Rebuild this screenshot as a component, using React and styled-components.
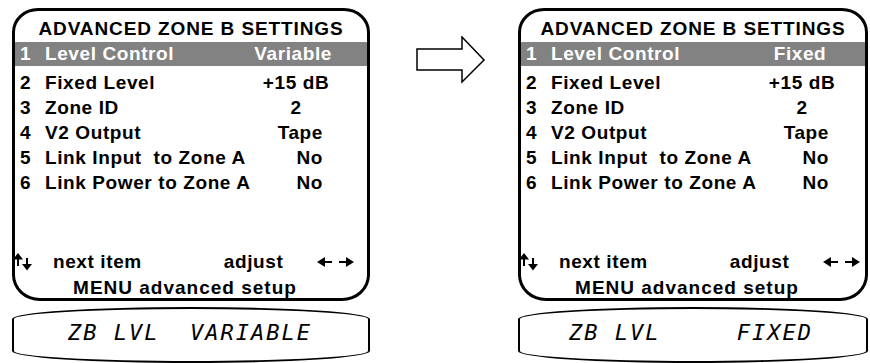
import styled, { createGlobalStyle } from "styled-components";

const GlobalStyle = createGlobalStyle`
  html, body {
    margin: 0;
    padding: 0;
    background: #ffffff;
  }
  body {
    font-family: "Liberation Sans", Arial, sans-serif;
    color: #000000;
  }
`;

const Page = styled.div`
  width: 870px;
  height: 363px;
  box-sizing: border-box;
  padding: 8px 0 0 12px;
  display: flex;
  align-items: flex-start;
  overflow: hidden;
`;

const Column = styled.div`
  width: ${(p) => p.$width}px;
  display: flex;
  flex-direction: column;
  gap: 6px;
  flex-shrink: 0;
`;

const Screen = styled.div`
  box-sizing: border-box;
  height: 293px;
  border: 3px solid #000000;
  border-radius: 26px 26px 28px 28px / 24px 24px 26px 26px;
  padding-top: 7px;
  display: flex;
  flex-direction: column;
`;

const Title = styled.div`
  font-size: 19px;
  font-weight: bold;
  line-height: 22px;
  letter-spacing: 0.9px;
  text-align: center;
  white-space: nowrap;
`;

const Row = styled.div`
  display: grid;
  grid-template-columns: 25px 217px 68px;
  padding-left: 5px;
  height: ${(p) => (p.$active ? 24 : 25)}px;
  line-height: ${(p) => (p.$active ? 24 : 25)}px;
  font-size: 19px;
  font-weight: bold;
  letter-spacing: 0.6px;
  white-space: pre;
  background: ${(p) => (p.$active ? "#828282" : "transparent")};
  color: ${(p) => (p.$active ? "#ffffff" : "#000000")};
  margin-top: ${(p) => (p.$active ? 2 : 0)}px;
  margin-bottom: ${(p) => (p.$active ? 4 : 0)}px;
`;

const Value = styled.span`
  display: flex;
  justify-content: ${(p) => (p.$align === "right" ? "flex-end" : "center")};
  padding-right: ${(p) => p.$pr || 0}px;
  margin-right: ${(p) => p.$mr || 0}px;
`;

const Footer = styled.div`
  margin-top: auto;
  display: flex;
  flex-direction: column;
  gap: 6px;
`;

const HintRow = styled.div`
  display: flex;
  align-items: center;
  height: 20px;
  line-height: 20px;
  font-size: 19px;
  font-weight: bold;
  letter-spacing: 0.6px;
  white-space: nowrap;
`;

const HintText = styled.span`
  display: flex;
  margin-left: ${(p) => p.$ml}px;
`;

const Menu = styled.div`
  height: 20px;
  line-height: 20px;
  font-size: 19px;
  font-weight: bold;
  letter-spacing: 1px;
  text-align: center;
  padding-right: 12px;
  white-space: nowrap;
`;

const Lcd = styled.div`
  box-sizing: border-box;
  height: 56px;
  border: 2.5px solid #000000;
  border-radius: 50% / 12px;
  padding: 11px 0 0 ${(p) => p.$pl}px;
  font-family: "DejaVu Sans Mono", "Liberation Mono", monospace;
  font-style: oblique;
  font-size: 22px;
  line-height: 26px;
  letter-spacing: 2px;
  white-space: pre;
`;

const ArrowWrap = styled.div`
  margin: 28px 32px 0 46px;
  width: 70px;
  height: 48px;
  flex-shrink: 0;
`;

const UpDown = () => (
  <svg width="19" height="18" viewBox="0 0 19 18" style={{ marginLeft: -2 }}>
    <path d="M0 6.5 L5 0 L10 6.5 Z" fill="#000" />
    <rect x="4" y="5" width="2" height="8" fill="#000" />
    <rect x="13" y="5" width="2" height="8" fill="#000" />
    <path d="M9 11 L14 17.5 L19 11 Z" fill="#000" />
  </svg>
);

const LeftRight = () => (
  <svg width="37" height="14" viewBox="0 0 37 14">
    <path d="M0 7 L8 2 L8 12 Z" fill="#000" />
    <rect x="7" y="6" width="8" height="2" fill="#000" />
    <rect x="22" y="6" width="8" height="2" fill="#000" />
    <path d="M37 7 L29 2 L29 12 Z" fill="#000" />
  </svg>
);

const BigArrow = () => (
  <svg width="70" height="48" viewBox="0 0 70 48">
    <path
      d="M1 13 L46 13 L46 1 L68 24 L46 46 L46 34 L1 34 Z"
      fill="#fff"
      stroke="#000"
      strokeWidth="1.5"
      strokeLinejoin="miter"
    />
  </svg>
);

const SettingsScreen = ({ width, first, lcd, lcdPad }) => {
  const rows = [
    ["2", "Fixed Level", "+15 dB", "center", 0],
    ["3", "Zone ID", "2", "center", 0],
    ["4", "V2 Output", "Tape", "right", 7],
    ["5", "Link Input  to Zone A", "No", "right", 7],
    ["6", "Link Power to Zone A", "No", "right", 7],
  ];
  return (
    <Column $width={width}>
      <Screen>
        <Title>ADVANCED ZONE B SETTINGS</Title>
        <Row $active>
          <span>1</span>
          <span>Level Control</span>
          <Value $align={first.align} $mr={first.mr}>
            {first.value}
          </Value>
        </Row>
        {rows.map(([n, label, value, align, pr]) => (
          <Row key={n}>
            <span>{n}</span>
            <span>{label}</span>
            <Value $align={align} $pr={pr}>
              {value}
            </Value>
          </Row>
        ))}
        <Footer>
          <HintRow>
            <UpDown />
            <HintText $ml={21}>next item</HintText>
            <HintText $ml={82}>adjust</HintText>
            <HintText $ml={34}>
              <LeftRight />
            </HintText>
          </HintRow>
          <Menu>MENU advanced setup</Menu>
        </Footer>
      </Screen>
      <Lcd $pl={lcdPad}>{lcd}</Lcd>
    </Column>
  );
};

export default function App() {
  return (
    <>
      <GlobalStyle />
      <Page>
        <SettingsScreen
          width={358}
          first={{ value: "Variable", align: "right", mr: -2 }}
          lcd="ZB LVL  VARIABLE"
          lcdPad={54}
        />
        <ArrowWrap>
          <BigArrow />
        </ArrowWrap>
        <SettingsScreen
          width={350}
          first={{ value: "Fixed", align: "center", mr: 4 }}
          lcd="ZB LVL     FIXED"
          lcdPad={49}
        />
      </Page>
    </>
  );
}
